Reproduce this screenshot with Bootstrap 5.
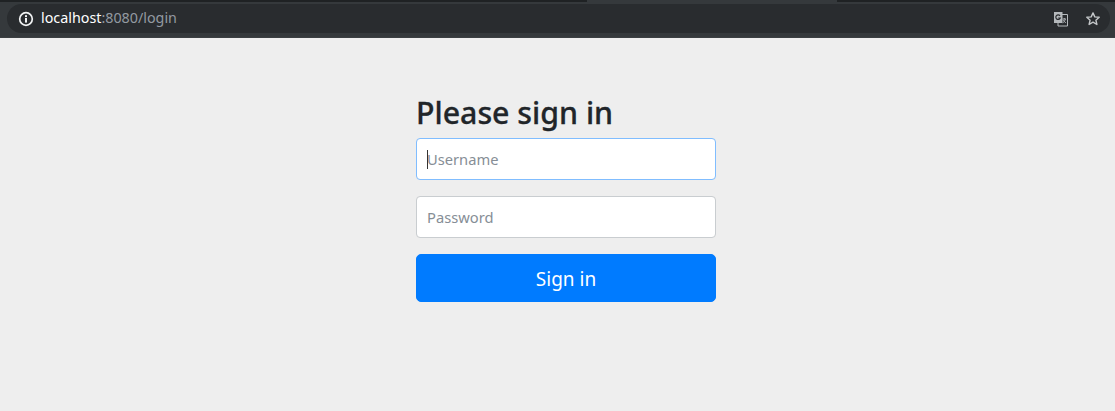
<!DOCTYPE html>
<html lang="en">
<head>
<meta charset="utf-8">
<title>Please sign in</title>
<link href="https://cdn.jsdelivr.net/npm/bootstrap@5.3.0/dist/css/bootstrap.min.css" rel="stylesheet">
<style>
html,body{height:100%;}
body{background:#eee;font-family:"Noto Sans","Open Sans",sans-serif;overflow:hidden;}
.chrome-strip{height:2px;background:linear-gradient(90deg,#1f2224 0,#1f2224 587px,#35393c 587px,#35393c 837px,#1f2224 837px);}
.chrome-bar{height:36px;background:#35393c;padding:2px 5px 3px 7px;box-shadow:inset 0 -1px 0 #3b3f42;}
.url-pill{height:29px;background:#292c2f;border-radius:15px;padding:0 9px 0 11px;}
.url-icon{margin-right:7px;}
.url-text{font-size:14.3px;color:#939aa1;line-height:1;}
.url-host{color:#fff;}
.signin-box{width:300px;margin-left:416px;padding-top:57px;}
.signin-title{font-size:30.3px;font-weight:500;line-height:36px;color:#212529;margin:0 0 7px;-webkit-text-stroke:.3px #212529;}
.signin-input{height:42px;font-size:14.7px;color:#495057;border:1px solid #c9cdd0;border-radius:4px;padding:6px 10px;box-shadow:none;}
.signin-input::placeholder{color:#868e96;opacity:1;}
.signin-input.is-active{border-color:#80bdff;}
.signin-input:focus{border-color:#80bdff;box-shadow:none;}
.signin-gap{margin-bottom:16px;}
.signin-caret{left:11px;top:12px;width:1px;height:19px;background:#333;}
.signin-btn{height:48px;font-size:19px;background:#007bff;border-color:#007bff;border-radius:5px;line-height:1.2;padding-top:8px;}
</style>
</head>
<body>
<div class="chrome-strip"></div>
<div class="chrome-bar">
  <div class="url-pill d-flex align-items-center">
    <svg width="16" height="16" viewBox="0 0 16 16" class="flex-shrink-0 url-icon" aria-hidden="true"><circle cx="8" cy="8" r="6.3" fill="none" stroke="#f1f3f4" stroke-width="1.7"/><rect x="7" y="7" width="2" height="4.6" fill="#f1f3f4"/><rect x="7" y="4.200" width="2" height="1.900" fill="#f1f3f4"/></svg>
    <span class="url-text"><span class="url-host">localhost</span>:8080/login</span>
    <span class="ms-auto d-flex align-items-center gap-3">
      <svg width="16" height="16" viewBox="0 0 16 16" aria-hidden="true"><path d="M5 3.500h9.500v11.500H5z" fill="none" stroke="#b5b9bc" stroke-width="1"/><path d="M1 1h8.500v11H1z" fill="#b5b9bc"/><path d="M7 4.800A2.300 2.300 0 1 0 7.300 7H5.200" fill="none" stroke="#292c2f" stroke-width="1.200"/><path d="M9.600 8h3.400M11.300 7v1M12.300 8c-.4 2-1.400 3.200-2.500 3.900M10.300 8.800c.5 1.300 1.300 2.300 2.600 3" fill="none" stroke="#b5b9bc" stroke-width=".9"/></svg>
      <svg width="16" height="16" viewBox="0 0 16 16" aria-hidden="true"><path d="M8 1.900l1.800 4 4.400.4-3.300 2.900 1 4.300L8 11.200l-3.900 2.300 1-4.300L1.800 6.300l4.400-.4z" fill="none" stroke="#c4c7c9" stroke-width="1.400" stroke-linejoin="round"/></svg>
    </span>
  </div>
</div>
<main class="signin-box">
  <form onsubmit="return false">
    <h2 class="signin-title">Please sign in</h2>
    <div class="position-relative signin-gap">
      <input type="text" class="form-control signin-input is-active" placeholder="Username" aria-label="Username">
      <span class="signin-caret position-absolute"></span>
    </div>
    <input type="password" class="form-control signin-input signin-gap" placeholder="Password" aria-label="Password">
    <button type="submit" class="btn btn-primary w-100 signin-btn">Sign in</button>
  </form>
</main>
</body>
</html>
